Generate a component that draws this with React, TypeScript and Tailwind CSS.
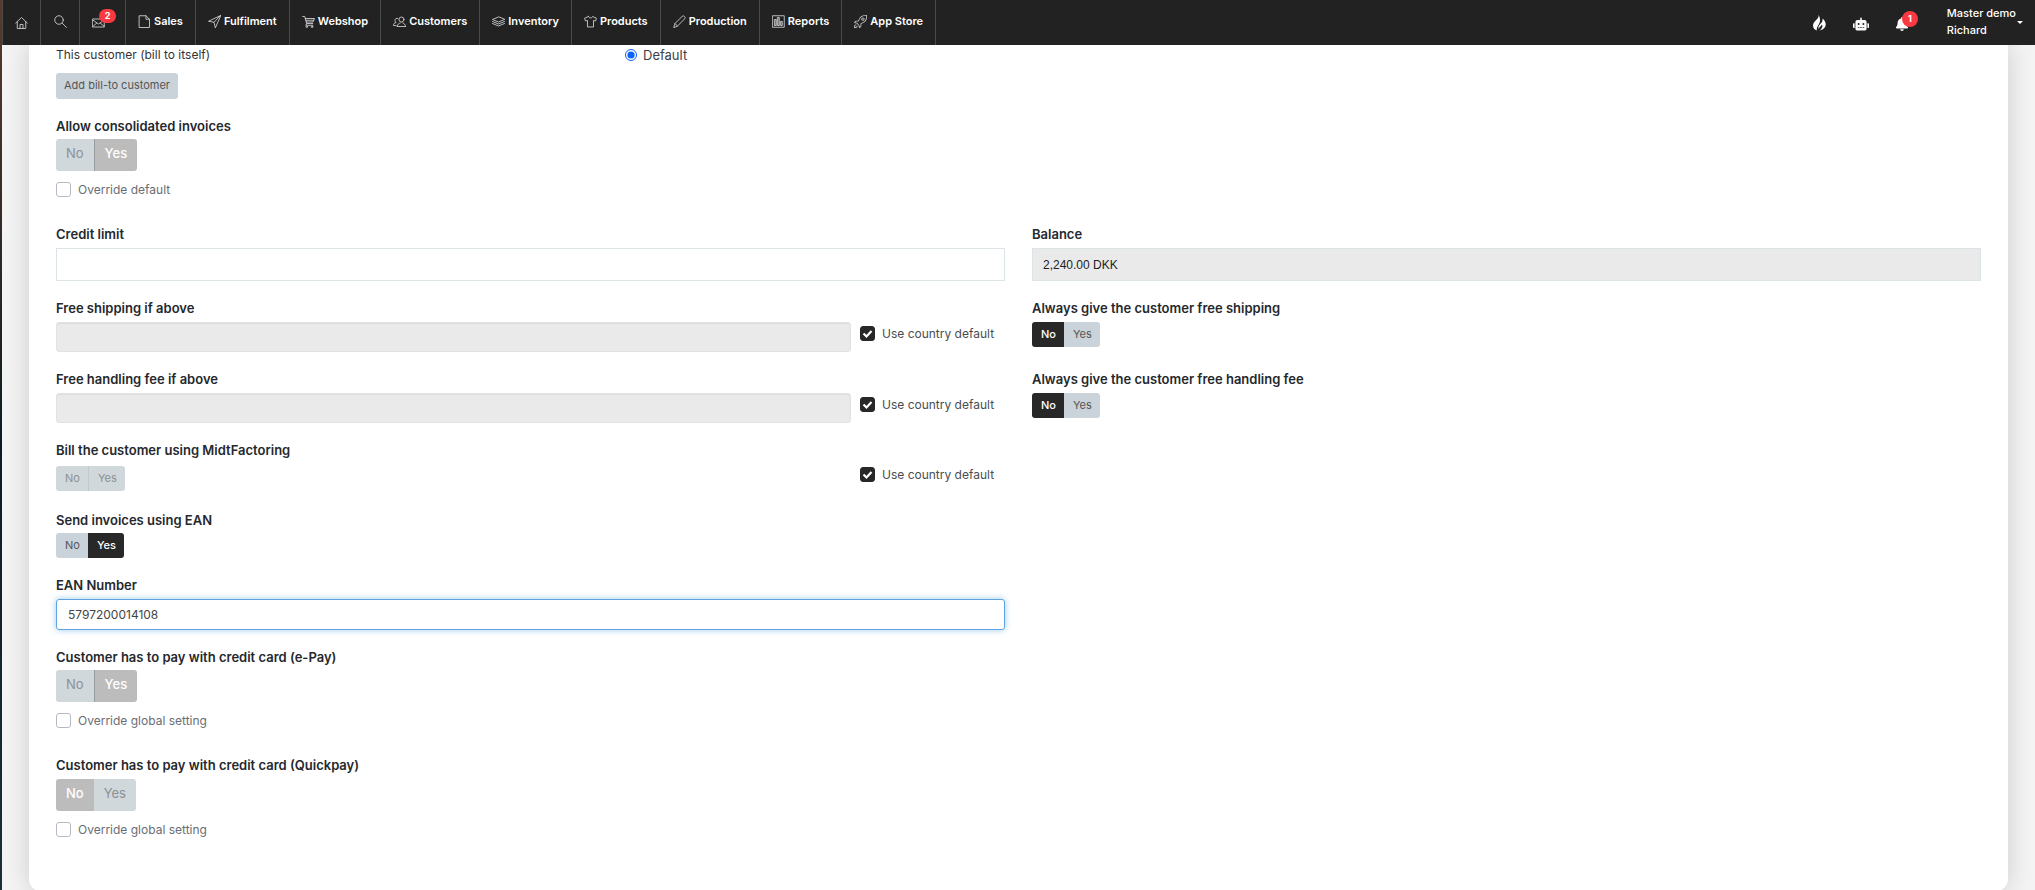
import React, { useState } from 'react';
import { FaBell, FaRobot } from 'react-icons/fa';
import { SlRocket } from 'react-icons/sl';

interface IconProps {
    children: React.ReactNode;
}

function Icon({ children }: IconProps) {
    return (
        <svg
            viewBox="0 0 26 26"
            className="size-[13px] shrink-0"
            fill="none"
            stroke="currentColor"
            strokeWidth="1.8"
            strokeLinecap="round"
            strokeLinejoin="round"
            aria-hidden="true"
        >
            {children}
        </svg>
    );
}

const HomeIcon = () => (
    <Icon>
        <path d="M1.500 14 13 3l11.500 11M4.500 12v13h17V12M10 25v-8h6v8" />
    </Icon>
);

const SearchIcon = () => (
    <Icon>
        <circle cx="10" cy="10" r="8.5" />
        <path d="m16.5 16.500 8.500 8.500" />
    </Icon>
);

const MailIcon = () => (
    <Icon>
        <path d="M1.500 8h23v16h-23zM1.500 10l11.500 8 11.500-8M1.500 23l8-7M24.500 23l-8-7" />
    </Icon>
);

const FlameIcon = () => (
    <svg viewBox="0 0 15 16" className="h-4 w-[15px]" fill="currentColor" aria-hidden="true">
        <path d="M6.500 0C7.500 4 1 6 1 10.500 1 13 2.500 14.800 5 15.500 3.500 12 8.500 9.500 8 4.500 7.900 2.500 7.200 1 6.500 0z" />
        <path d="M10.500 3.500c4.800 3.500 4.500 10.700-3 12 2.500-1.800 3.500-4 2.500-6-1.200 1.800-2.700 2.500-3.500 4.500C5.500 9.500 11.500 8.500 10.500 3.500z" />
    </svg>
);

const menu = [
    {
        label: 'Sales',
        icon: <Icon><path d="M3 1.500h13l7 7V25H3zM16 1.500v7h7" /></Icon>,
    },
    {
        label: 'Fulfilment',
        icon: <Icon><path d="M25 1 1 12.500l11 2L14.500 25z" /><path d="M25 1 12 14.500" /></Icon>,
    },
    {
        label: 'Webshop',
        icon: (
            <Icon>
                <path d="M1.500 3h4l4 14h12M6.500 7H25l-3 7H8.500M7.500 10.500h16M9.500 17l-2 3.500h14" />
                <circle cx="9.500" cy="23.500" r="1.600" />
                <circle cx="20" cy="23.500" r="1.600" />
            </Icon>
        ),
    },
    {
        label: 'Customers',
        icon: (
            <Icon>
                <circle cx="17" cy="9" r="5" />
                <path d="M8.500 23c0-5 3-5.500 6-7M25 23c0-5-2.500-5.500-5.500-7M8.500 23H25" />
                <path d="M10 7c-3-1.500-6 .5-6 4 0 2 1 3.500 2 4-3 1-5 2-5 6h5" />
            </Icon>
        ),
    },
    {
        label: 'Inventory',
        icon: (
            <Icon>
                <path d="M13 4 1 9l12 5 12-5zM1 13l12 5 12-5M1 17l12 5 12-5" />
            </Icon>
        ),
    },
    {
        label: 'Products',
        icon: (
            <Icon>
                <path d="M9 3 1 6.500 3 12l4-1v13h12V11l4 1 2-5.500L17 3c-1 4-7 4-8 0z" />
            </Icon>
        ),
    },
    {
        label: 'Production',
        icon: <Icon><path d="M1.500 24.500 4 17 19 2c2-2 7 3 5 5L9 22zM4 17l5 5" /></Icon>,
    },
    {
        label: 'Reports',
        icon: (
            <Icon>
                <path d="M1.500 1.500h23v23h-23z" />
                <path d="M5.500 9h3v12h-3zM11.500 5h3v16h-3zM17.500 13h3v8h-3z" fill="currentColor" fillOpacity=".4" />
            </Icon>
        ),
    },
    { label: 'App Store', icon: <SlRocket className="size-[13px] shrink-0" /> },
];

function Header() {
    return (
        <header className="flex h-[45px] shrink-0 justify-between bg-[#222] text-white">
            <nav className="flex border-l border-[#4b4b4b] text-[#ccc]">
                <a href="#home" aria-label="Home" className="flex w-[38px] items-center justify-center border-r border-[#4b4b4b] pb-px">
                    <HomeIcon />
                </a>
                <a href="#search" aria-label="Search" className="flex w-[39px] items-center justify-center border-r border-[#4b4b4b] pb-[3px]">
                    <SearchIcon />
                </a>
                <a href="#messages" aria-label="Messages" className="relative flex w-[46px] items-center border-r border-[#4b4b4b] px-3 pb-[3px]">
                    <MailIcon />
                    <span className="absolute top-[9px] right-[9px] flex h-[14px] w-[17px] items-center justify-center rounded-full bg-[#fa3a40] text-[9px] font-bold text-white">
                        2
                    </span>
                </a>
                {menu.map((item) => (
                    <a
                        key={item.label}
                        href={`#${item.label.toLowerCase().replace(' ', '-')}`}
                        className="flex items-center gap-[3px] border-r border-[#4b4b4b] px-3 pb-[2px]"
                    >
                        {item.icon}
                        <span className="text-[11px] font-semibold whitespace-nowrap text-white">{item.label}</span>
                    </a>
                ))}
            </nav>
            <div className="flex items-center pr-3">
                <button type="button" aria-label="Activity" className="mr-[26px]">
                    <FlameIcon />
                </button>
                <button type="button" aria-label="Assistant" className="mr-[26px] pt-[2px]">
                    <FaRobot className="size-[16px]" />
                </button>
                <button type="button" aria-label="Notifications" className="relative mr-[38px] pt-[2px]">
                    <FaBell className="size-[14px]" />
                    <span className="absolute -top-1 left-[7px] flex size-4 items-center justify-center rounded-full bg-[#fa3a40] text-[9px] font-bold">
                        1
                    </span>
                </button>
                <button type="button" className="flex items-center gap-px pb-px text-left text-[11px] leading-[17px] font-medium">
                    <span>
                        Master demo
                        <br />
                        Richard
                    </span>
                    <svg viewBox="0 0 6 3" className="h-[3px] w-[6px]" aria-hidden="true">
                        <path d="M0 0h6L3 3z" fill="currentColor" />
                    </svg>
                </button>
            </div>
        </header>
    );
}

interface ToggleProps {
    label: string;
    initial: 'No' | 'Yes' | null;
    large?: boolean;
    disabled?: boolean;
}

function Toggle({ label, initial, large = false, disabled = false }: ToggleProps) {
    const [value, setValue] = useState(initial);

    function color(active: boolean) {
        if (disabled) {
            return active ? 'bg-[#bcbcbc] text-white font-medium' : 'bg-[#d0d8dc] text-[#8d9092]';
        }
        return active ? 'bg-[#282828] text-white font-medium' : 'bg-[#cad3d9] text-[#555]';
    }

    return (
        <div role="group" aria-label={label} className="flex w-fit overflow-hidden rounded-[3px]">
            {(['No', 'Yes'] as const).map((option) => (
                <button
                    key={option}
                    type="button"
                    disabled={disabled}
                    aria-pressed={value === option}
                    onClick={() => setValue(option)}
                    className={`${large ? 'h-8 px-[10px] pb-[3px] text-[13px]' : 'h-[25px] pr-2 pb-px pl-[9px] text-[11px]'} ${color(value === option)} ${
                        disabled && option === 'No' && value !== 'No' ? (value ? 'border-r border-[#979c9f]' : 'border-r border-[#bec8cd]') : ''
                    }`}
                >
                    {option}
                </button>
            ))}
        </div>
    );
}

function Check({ label, checked = false }: { label: string; checked?: boolean }) {
    return (
        <label className={`flex items-center gap-[7px] text-[12px] leading-[15px] whitespace-nowrap ${checked ? 'text-[#4a4d50]' : 'text-[#6a6d74]'}`}>
            <span className="relative flex size-[15px]">
                <input
                    type="checkbox"
                    defaultChecked={checked}
                    className="peer size-[15px] appearance-none rounded-[3px] border border-[#b9b9c6] bg-white checked:border-[#282828] checked:bg-[#282828]"
                />
                <svg viewBox="0 0 15 15" className="pointer-events-none absolute inset-0 hidden peer-checked:block" aria-hidden="true">
                    <path d="m3.500 7.500 3 3 5-5.500" fill="none" stroke="#fff" strokeWidth="2.200" />
                </svg>
            </span>
            {label}
        </label>
    );
}

const heading = 'block text-[13px] leading-[18px] font-semibold text-[#25282d]';

function DefaultAmount({ id, label }: { id: string; label: string }) {
    return (
        <div>
            <label htmlFor={id} className={heading}>{label}</label>
            <div className="mt-[5px] flex items-start gap-[9px]">
                <input
                    id={id}
                    disabled
                    className="h-[30px] min-w-0 flex-1 rounded-[3px] border border-[#dde3e6] bg-[#eaeaea] px-3 text-[12px] shadow-[inset_0_1px_1px_rgba(0,0,0,0.06)]"
                />
                <div className="w-[145px] pt-1">
                    <Check label="Use country default" checked />
                </div>
            </div>
        </div>
    );
}

function CustomerForm() {
    const [creditLimit, setCreditLimit] = useState('');
    const [ean, setEan] = useState('5797200014108');

    return (
        <form className="rounded-b-xl bg-white px-[27px] pb-[54px] shadow-[0_0_26px_rgba(40,44,60,0.2)]">
            <div className="grid grid-cols-[569px_1fr] items-center">
                <span className="text-[12px] leading-[18px] text-[#333]">This customer (bill to itself)</span>
                <label className="flex items-center gap-[6px] text-[13px] leading-5 text-[#3d4147]">
                    <input type="radio" name="billTo" defaultChecked className="size-3 accent-[#0d63f8]" />
                    Default
                </label>
            </div>
            <button type="button" className="mt-2 h-[26px] rounded-[3px] bg-[#cad3d9] px-2 pb-px text-[11px] text-[#555]">
                Add bill-to customer
            </button>

            <div className="mt-[18px] space-y-1">
                <h3 className={heading}>Allow consolidated invoices</h3>
                <Toggle label="Allow consolidated invoices" initial="Yes" large disabled />
                <div className="pt-[7px]">
                    <Check label="Override default" />
                </div>
            </div>

            <div className="mt-7 grid grid-cols-2 gap-x-[27px] gap-y-[18px]">
                <div>
                    <label htmlFor="creditLimit" className={heading}>Credit limit</label>
                    <input
                        id="creditLimit"
                        value={creditLimit}
                        onChange={(e) => setCreditLimit(e.target.value)}
                        className="mt-[5px] h-[33px] w-full border border-[#dce4e7] px-[10px] text-[12px]"
                    />
                </div>
                <div>
                    <label htmlFor="balance" className={heading}>Balance</label>
                    <input
                        id="balance"
                        value="2,240.00 DKK"
                        readOnly
                        className="mt-[5px] h-[33px] w-full border border-[#dce4e7] bg-[#eaeaea] px-[10px] font-['Liberation_Sans',sans-serif] text-[12px] text-[#222]"
                    />
                </div>
                <DefaultAmount id="freeShipping" label="Free shipping if above" />
                <div className="space-y-[5px]">
                    <h3 className={heading}>Always give the customer free shipping</h3>
                    <Toggle label="Always give the customer free shipping" initial="No" />
                </div>
                <DefaultAmount id="freeHandling" label="Free handling fee if above" />
                <div className="space-y-[5px]">
                    <h3 className={heading}>Always give the customer free handling fee</h3>
                    <Toggle label="Always give the customer free handling fee" initial="No" />
                </div>
                <div>
                    <h3 className={heading}>Bill the customer using MidtFactoring</h3>
                    <div className="mt-[7px] flex items-start justify-between">
                        <Toggle label="Bill the customer using MidtFactoring" initial={null} disabled />
                        <div className="w-[145px] pt-px">
                            <Check label="Use country default" checked />
                        </div>
                    </div>
                </div>
            </div>

            <div className="mt-5 space-y-1">
                <h3 className={heading}>Send invoices using EAN</h3>
                <Toggle label="Send invoices using EAN" initial="Yes" />
            </div>

            <div className="mt-[18px] grid grid-cols-2 gap-x-[27px]">
                <div>
                    <label htmlFor="ean" className={heading}>EAN Number</label>
                    <input
                        id="ean"
                        value={ean}
                        onChange={(e) => setEan(e.target.value)}
                        className="mt-[5px] h-[31px] w-full rounded-[3px] border border-[#5da4e0] px-[11px] text-[12px] text-[#444] shadow-[0_0_6px_rgba(93,164,224,0.6)] outline-none"
                    />
                </div>
            </div>

            <div className="mt-[18px] space-y-1">
                <h3 className={heading}>Customer has to pay with credit card (e-Pay)</h3>
                <Toggle label="Customer has to pay with credit card (e-Pay)" initial="Yes" large disabled />
                <div className="pt-[7px]">
                    <Check label="Override global setting" />
                </div>
            </div>

            <div className="mt-7 space-y-[5px]">
                <h3 className={heading}>Customer has to pay with credit card (Quickpay)</h3>
                <Toggle label="Customer has to pay with credit card (Quickpay)" initial="No" large disabled />
                <div className="pt-[6px]">
                    <Check label="Override global setting" />
                </div>
            </div>
        </form>
    );
}

export default function App() {
    return (
        <div className="flex h-screen bg-[#f4f4f4] font-['Inter','Liberation_Sans',sans-serif] antialiased">
            <div className="w-[2px] shrink-0 bg-linear-to-b from-[#5a3a2a] via-[#0c1c22] to-[#1c3038]" />
            <div className="flex min-w-0 flex-1 flex-col">
                <Header />
                <main className="min-h-0 flex-1 overflow-y-auto px-[27px] [scrollbar-width:none]">
                    <CustomerForm />
                </main>
            </div>
        </div>
    );
}
